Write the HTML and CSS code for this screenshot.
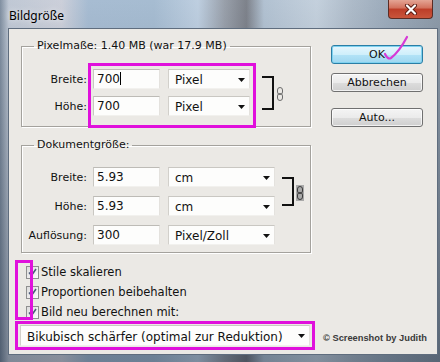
FILE: index.html
```html
<!DOCTYPE html>
<html lang="de">
<head>
    <meta charset="UTF-8">
    <meta name="viewport" content="width=device-width, initial-scale=1.0">
    <title>Bildgröße</title>
    <link rel="stylesheet" href="styles.css">
</head>
<body>
<div class="window">
    <div class="titlebar">
        <span class="title">Bildgröße</span>
        <div class="close">
            <svg width="14" height="11" viewBox="0 0 14 11">
                <path d="M3 1.5 L11 9.5 M11 1.5 L3 9.5" stroke="#5a1a10" stroke-width="4" stroke-linecap="round"/>
                <path d="M3 1.5 L11 9.5 M11 1.5 L3 9.5" stroke="#fff" stroke-width="2.2" stroke-linecap="round"/>
            </svg>
        </div>
    </div>

    <div class="frame">
        <div class="client">
            <div class="main">
                <div class="left">
                    <fieldset class="group group-pixel">
                        <legend>Pixelmaße: 1.40 MB (war 17.9 MB)</legend>
                        <div class="linked">
                            <div class="rows">
                                <div class="row">
                                    <span class="lbl">Breite:</span>
                                    <div class="field">700<span class="caret"></span></div>
                                    <div class="dropdown short">Pixel
                                        <svg class="arrow" width="7" height="4" viewBox="0 0 7 4"><path d="M0 0 H7 L3.5 4 Z"/></svg>
                                    </div>
                                </div>
                                <div class="row">
                                    <span class="lbl">Höhe:</span>
                                    <div class="field">700</div>
                                    <div class="dropdown short">Pixel
                                        <svg class="arrow" width="7" height="4" viewBox="0 0 7 4"><path d="M0 0 H7 L3.5 4 Z"/></svg>
                                    </div>
                                </div>
                            </div>
                            <div class="bracket"></div>
                            <svg class="chain" width="8" height="14" viewBox="0 0 8 14">
                                <rect x="1.5" y="0.5" width="5" height="7" rx="2.5" fill="none" stroke="#6c6c6c"/>
                                <rect x="1.5" y="6.5" width="5" height="7" rx="2.5" fill="none" stroke="#6c6c6c"/>
                            </svg>
                        </div>
                    </fieldset>

                    <fieldset class="group group-doc">
                        <legend>Dokumentgröße:</legend>
                        <div class="linked">
                            <div class="rows">
                                <div class="row">
                                    <span class="lbl">Breite:</span>
                                    <div class="field">5.93</div>
                                    <div class="dropdown">cm
                                        <svg class="arrow" width="7" height="4" viewBox="0 0 7 4"><path d="M0 0 H7 L3.5 4 Z"/></svg>
                                    </div>
                                </div>
                                <div class="row">
                                    <span class="lbl">Höhe:</span>
                                    <div class="field">5.93</div>
                                    <div class="dropdown">cm
                                        <svg class="arrow" width="7" height="4" viewBox="0 0 7 4"><path d="M0 0 H7 L3.5 4 Z"/></svg>
                                    </div>
                                </div>
                            </div>
                            <div class="bracket"></div>
                            <svg class="chain chain-on" width="8" height="16" viewBox="0 0 8 16">
                                <rect x="0" y="0" width="8" height="16" fill="#a9a9a9"/>
                                <rect x="1.5" y="1.5" width="5" height="7" rx="2.5" fill="none" stroke="#3c3c3c"/>
                                <rect x="1.5" y="7.5" width="5" height="7" rx="2.5" fill="none" stroke="#3c3c3c"/>
                            </svg>
                        </div>
                        <div class="row row-last">
                            <span class="lbl">Auflösung:</span>
                            <div class="field">300</div>
                            <div class="dropdown">Pixel/Zoll
                                <svg class="arrow" width="7" height="4" viewBox="0 0 7 4"><path d="M0 0 H7 L3.5 4 Z"/></svg>
                            </div>
                        </div>
                    </fieldset>

                    <div class="checks">
                        <div class="check"><span class="box"><svg width="9" height="9" viewBox="0 0 9 9"><path d="M1 4.5 L3.5 7.5 L8 1" fill="none" stroke="#4a5a78" stroke-width="1.6"/></svg></span>Stile skalieren</div>
                        <div class="check"><span class="box"><svg width="9" height="9" viewBox="0 0 9 9"><path d="M1 4.5 L3.5 7.5 L8 1" fill="none" stroke="#4a5a78" stroke-width="1.6"/></svg></span>Proportionen beibehalten</div>
                        <div class="check"><span class="box"><svg width="9" height="9" viewBox="0 0 9 9"><path d="M1 4.5 L3.5 7.5 L8 1" fill="none" stroke="#4a5a78" stroke-width="1.6"/></svg></span>Bild neu berechnen mit:</div>
                    </div>
                </div>

                <div class="buttons">
                    <div class="btn btn-ok">OK</div>
                    <div class="btn">Abbrechen</div>
                    <div class="btn btn-auto">Auto...</div>
                </div>
            </div>

            <div class="bottom">
                <div class="pick-wrap">
                    <div class="dropdown wide">Bikubisch schärfer (optimal zur Reduktion)
                        <svg class="arrow" width="7" height="4" viewBox="0 0 7 4"><path d="M0 0 H7 L3.5 4 Z"/></svg>
                    </div>
                </div>
                <span class="credit">© Screenshot by Judith</span>
            </div>

            <!-- annotations drawn over the dialog -->
            <div class="mark mark-pixel"></div>
            <div class="mark mark-checks"></div>
            <svg class="tick" width="32" height="30" viewBox="0 0 32 30">
                <path d="M5 21 Q8 27 11 25 Q19 19 27 4" fill="none" stroke="#d63ad6" stroke-width="2.2" stroke-linecap="round"/>
            </svg>
        </div>
    </div>
</div>
</body>
</html>
```

FILE: styles.css
```css
body {
    margin: 0;
    width: 440px;
    height: 362px;
    overflow: hidden;
    font-family: "DejaVu Sans", sans-serif;
    font-size: 11px;
    color: #111;
}
.window {
    height: 362px;
    display: flex;
    flex-direction: column;
    background:
        linear-gradient(180deg, rgba(255, 255, 255, 0.12), rgba(20, 30, 45, 0.35)),
        linear-gradient(90deg, #6f8094 0%, #b7c1cf 2%, #c5c9d5 14%, #9bb3cc 20%, #9ab3cb 35%,
            #b5c8dc 45%, #8b939f 51%, #6c717b 56%, #a7b9cb 60%, #bccad8 72%, #a2b1c1 80%,
            #8fa0b2 88%, #7d8c9c 100%);
}
.titlebar {
    height: 28px;
    display: flex;
    align-items: flex-start;
    justify-content: space-between;
}
.title {
    font-family: "Noto Sans", sans-serif;
    font-size: 12px;
    color: #000;
    margin: 7px 0 0 9px;
    text-shadow: 0 0 6px rgba(255, 255, 255, 0.9);
}
.close {
    width: 45px;
    height: 19px;
    margin-right: 7px;
    box-sizing: border-box;
    border: 1px solid #5b2c24;
    border-top: 0;
    border-radius: 0 0 4px 4px;
    background: linear-gradient(#e4a595, #d2705c 45%, #bd3d28 50%, #c9553b 100%);
    display: flex;
    align-items: center;
    justify-content: center;
}
.frame {
    flex: 1;
    display: flex;
    padding: 0 6px 7px 8px;
}
.client {
    flex: 1;
    position: relative;
    background: #ebe9e5;
    border: 1px solid #5f6d7e;
    padding: 10px 10px 0 6px;
}
.main {
    display: flex;
}
.left {
    width: 290px;
    margin-left: 6px;
}
.group {
    margin: 0;
    padding: 16px 0 10px 0;
    min-width: 0;
    border: 1px solid #a4a29d;
    box-shadow: 1px 1px 0 #fff, inset 1px 1px 0 #fff;
}
.group legend {
    margin-left: 12px;
    padding: 0 3px;
    line-height: 14px;
}
.group-doc {
    margin-top: 11px;
    padding: 15px 0 7px 0;
}
.linked {
    display: flex;
    align-items: center;
}
.rows {
    display: flex;
    flex-direction: column;
    gap: 7px;
}
.group-doc .rows {
    gap: 9px;
}
.row {
    display: flex;
    align-items: center;
    height: 20px;
}
.row-last {
    margin-top: 9px;
}
.lbl {
    width: 65px;
    text-align: right;
    margin-right: 6px;
}
.field {
    width: 67px;
    height: 20px;
    box-sizing: border-box;
    margin-right: 8px;
    padding-left: 3px;
    font-size: 12px;
    line-height: 18px;
    background: #fdfdfc;
    border: 1px solid;
    border-color: #bdbbb6 #e4e2de #f2f1ee #c9c7c2;
}
.caret {
    display: inline-block;
    width: 1px;
    height: 13px;
    background: #000;
    vertical-align: -2px;
}
.dropdown {
    width: 107px;
    height: 20px;
    box-sizing: border-box;
    display: flex;
    align-items: center;
    justify-content: space-between;
    padding: 2px 4px 0 6px;
    font-size: 12px;
    background: #fdfdfc;
    border: 1px solid;
    border-color: #c9c7c2 #e4e2de #f2f1ee #d2d0cb;
}
.dropdown.short {
    width: 82px;
}
.arrow {
    fill: #111;
    margin-top: -1px;
}
.bracket {
    box-sizing: border-box;
    width: 12px;
    height: 34px;
    margin-left: 12px;
    border: 2px solid #111;
    border-left: 0;
}
.chain {
    margin-left: 2px;
    margin-top: 2px;
}
.group-doc .bracket {
    height: 29px;
    margin-left: 7px;
}
.group-doc .chain {
    margin-left: 2px;
}
.checks {
    margin-top: 10px;
    padding-left: 5px;
    display: flex;
    flex-direction: column;
    gap: 2px;
}
.check {
    display: flex;
    align-items: center;
    height: 18px;
    font-size: 11.5px;
}
.box {
    width: 13px;
    height: 13px;
    box-sizing: border-box;
    margin-right: 2px;
    border: 1px solid #8e8f8f;
    background: linear-gradient(135deg, #dcdcdc, #fbfbfb);
    display: flex;
    align-items: center;
    justify-content: center;
}
.buttons {
    width: 92px;
    margin: 6px 0 0 20px;
    display: flex;
    flex-direction: column;
}
.btn {
    height: 19px;
    box-sizing: border-box;
    margin-top: 9px;
    display: flex;
    align-items: center;
    justify-content: center;
    border: 1px solid #707070;
    border-radius: 3px;
    background: linear-gradient(#f4f4f4, #ebebeb 50%, #dddddd 51%, #cfcfcf);
    box-shadow: inset 0 0 0 1px rgba(255, 255, 255, 0.7);
}
.btn-ok {
    margin-top: 0;
    border-color: #2b7ea5;
    background: linear-gradient(#e6f6fd, #cfeffb 50%, #b3e3f7 51%, #9ed7f0);
    box-shadow: inset 0 0 0 1px #7fd2f0;
}
.btn-auto {
    margin-top: 16px;
}
.bottom {
    display: flex;
    align-items: center;
    margin-top: 0;
}
.pick-wrap {
    flex-shrink: 0;
    width: 300px;
    box-sizing: border-box;
    border: 3px solid #e010dc;
    padding: 1px 2px;
}
.dropdown.wide {
    width: 100%;
    height: 21px;
}
.credit {
    flex-shrink: 0;
    white-space: nowrap;
    margin-left: 8px;
    margin-top: 5px;
    font-family: "Liberation Sans", Arial, sans-serif;
    font-weight: bold;
    font-size: 9.3px;
    color: #3a3a3a;
}
.mark {
    position: absolute;
    box-sizing: border-box;
    border: 3px solid #e010dc;
}
.mark-pixel {
    left: 79px;
    top: 34px;
    width: 168px;
    height: 65px;
}
.mark-checks {
    left: 6px;
    top: 231px;
    width: 18px;
    height: 60px;
}
.tick {
    position: absolute;
    left: 371px;
    top: 4px;
}
```
